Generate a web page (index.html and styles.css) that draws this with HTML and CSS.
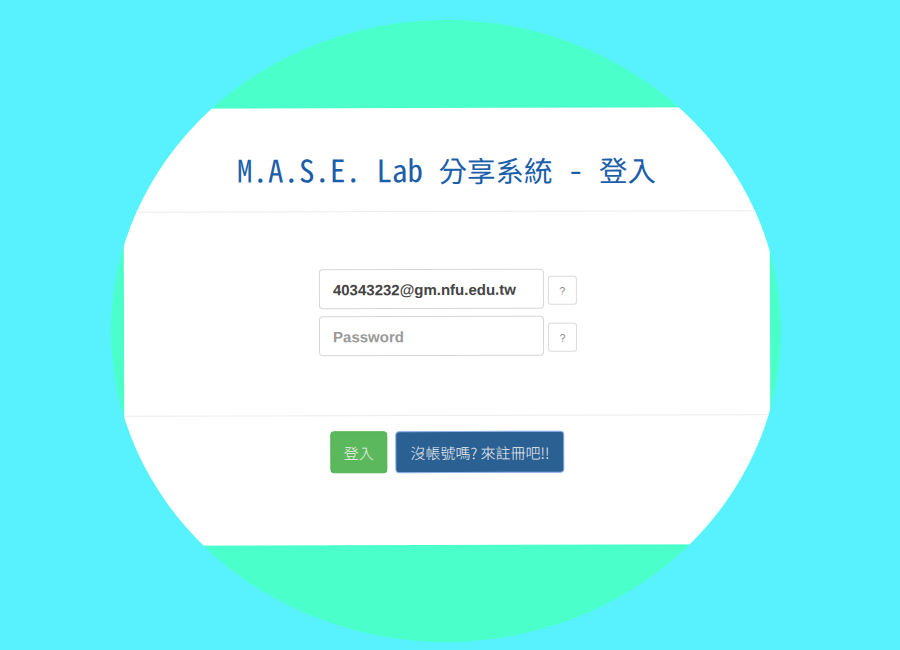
FILE: index.html
```html
<!DOCTYPE html>
<html lang="zh-Hant">
<head>
<meta charset="utf-8">
<title>M.A.S.E. Lab 分享系統 - 登入</title>
<link rel="stylesheet" href="styles.css">
</head>
<body>
<div class="stage">
  <div class="circle">
    <div class="card">
      <div class="card-header">
        <h1 class="title"><span class="lat">M.A.S.E. Lab </span><span class="cjk">分享系統</span><span class="lat"> - </span><span class="cjk">登入</span></h1>
      </div>
      <div class="card-body">
        <div class="field">
          <input class="input" type="text" value="40343232@gm.nfu.edu.tw">
          <button class="help" type="button">?</button>
        </div>
        <div class="field">
          <input class="input" type="password" placeholder="Password">
          <button class="help" type="button">?</button>
        </div>
      </div>
      <div class="card-footer">
        <button class="btn btn-green" type="button">登入</button>
        <button class="btn btn-blue" type="button">沒帳號嗎? 來註冊吧!!</button>
      </div>
    </div>
  </div>
</div>
</body>
</html>
```
FILE: styles.css
```css
html, body {
  margin: 0;
  padding: 0;
}
body {
  background: #58f2ff;
  width: 900px;
  height: 650px;
  overflow: hidden;
  font-family: "Liberation Sans", "Noto Sans CJK TC", sans-serif;
}
.stage {
  padding: 20px 0 0 111px;
}
.circle {
  width: 670px;
  height: 622px;
  border-radius: 50%;
  background: #4affca;
  overflow: hidden;
  display: flex;
  flex-direction: column;
  align-items: center;
  padding-top: 88px;
  box-sizing: border-box;
}
.card {
  width: 646px;
  height: 437px;
  flex: none;
  background: #fff;
  display: flex;
  flex-direction: column;
  transform: rotate(-0.15deg);
  margin-left: 2px;
}
.card-header {
  height: 104px;
  border-bottom: 1px solid #ececec;
  display: flex;
  align-items: center;
  justify-content: center;
  box-sizing: border-box;
  padding-top: 18px;
}
.title {
  margin: 0;
  font-weight: normal;
  color: #1b5ea9;
  font-size: 29px;
  line-height: 1;
  white-space: pre;
  font-family: "Noto Sans Mono CJK TC", "Noto Sans CJK TC", sans-serif;
}
.lat {
  font-family: "Noto Sans Mono CJK TC", "DejaVu Sans Mono", monospace;
  font-size: 31px;
}
.cjk {
  font-size: 28.5px;
}
.card-body {
  height: 204px;
  border-bottom: 1px solid #ececec;
  box-sizing: border-box;
  padding-top: 57px;
  display: flex;
  flex-direction: column;
  align-items: center;
  gap: 7px;
}
.field {
  display: flex;
  align-items: center;
  gap: 4px;
  margin-left: 2px;
}
.input {
  width: 225px;
  height: 40px;
  box-sizing: border-box;
  border: 1px solid #d6d6d6;
  border-radius: 4px;
  padding: 0 13px;
  font-family: "Liberation Sans", sans-serif;
  font-size: 15px;
  font-weight: bold;
  color: #444;
  outline: none;
}
.input::placeholder {
  color: #9a9a9a;
  font-weight: bold;
}
.help {
  width: 29px;
  height: 29px;
  box-sizing: border-box;
  border: 1px solid #dcdcdc;
  border-radius: 3px;
  background: #fff;
  color: #888;
  font-family: "Liberation Sans", sans-serif;
  font-size: 11px;
  padding: 0;
  margin-top: 3px;
}
.card-footer {
  padding-top: 15px;
  display: flex;
  justify-content: center;
  gap: 8px;
  margin-left: 0;
}
.btn {
  height: 42px;
  box-sizing: border-box;
  border-radius: 4px;
  font-family: "Noto Sans CJK TC", sans-serif;
  font-size: 15px;
  color: #f2f2f2;
  padding: 0 10px;
  font-weight: 300;
  white-space: nowrap;
}
.btn-green {
  width: 57px;
  background: #5cb85c;
  border: 1px solid #52b152;
}
.btn-blue {
  width: 169px;
  background: #2b6093;
  border: 1px solid #8cb2e6;
}
```
